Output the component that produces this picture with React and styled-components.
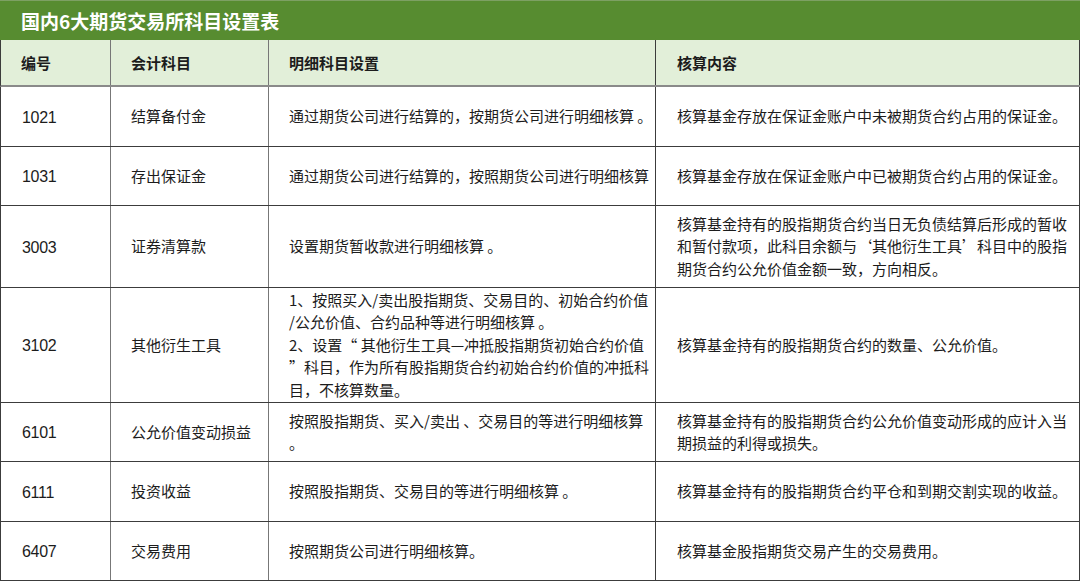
import React from "react";
import styled, { createGlobalStyle } from "styled-components";

const GlobalStyle = createGlobalStyle`
  html, body {
    margin: 0;
    padding: 0;
    background: #fff;
  }
  body {
    font-family: "Noto Sans CJK SC", "Noto Sans", sans-serif;
  }
`;

const Table = styled.div`
  width: 1080px;
  box-sizing: border-box;
  background: #fff;
`;

const Title = styled.div`
  height: 40px;
  box-sizing: border-box;
  background: #578c30;
  border-top: 1px solid #7da063;
  color: #fff;
  font-size: 19px;
  font-weight: 700;
  display: flex;
  align-items: center;
  padding-left: 21px;
  padding-bottom: 1px;
`;

const Row = styled.div`
  display: grid;
  grid-template-columns: 110px 158px 387px 1fr;
  height: ${(p) => p.$h}px;
  box-sizing: border-box;
  border-left: 1px solid #3c3c3c;
  border-bottom: ${(p) => (p.$head ? "2px solid #8a8a8a" : "1px solid #3c3c3c")};
  background: ${(p) => (p.$head ? "#e2efd9" : "#fff")};
`;

const Cell = styled.div`
  box-sizing: border-box;
  border-right: 1px solid ${(p) => (p.$soft ? "#777" : "#3c3c3c")};
  display: flex;
  flex-direction: column;
  justify-content: center;
  padding-left: ${(p) => p.$pad || 20}px;
  padding-top: ${(p) => (p.$head ? 2 : 0)}px;
  font-size: 15px;
  line-height: 22.4px;
  font-weight: ${(p) => (p.$head ? 700 : 400)};
  color: #1c1c1c;
`;

const CodeCell = styled(Cell)`
  font-family: "Liberation Sans", "Noto Sans CJK SC", sans-serif;
  font-size: 16px;
  letter-spacing: -0.3px;
  padding-left: 21px;
  padding-top: 3px;
`;

const Line = styled.span`
  display: block;
  white-space: pre;
`;

const rows = [
  {
    h: 60,
    code: "1021",
    name: "结算备付金",
    detail: ["通过期货公司进行结算的，按期货公司进行明细核算 。"],
    content: ["核算基金存放在保证金账户中未被期货合约占用的保证金。"],
  },
  {
    h: 59,
    code: "1031",
    name: "存出保证金",
    detail: ["通过期货公司进行结算的，按照期货公司进行明细核算"],
    content: ["核算基金存放在保证金账户中已被期货合约占用的保证金。"],
  },
  {
    h: 82,
    code: "3003",
    name: "证券清算款",
    detail: ["设置期货暂收款进行明细核算 。"],
    content: [
      "核算基金持有的股指期货合约当日无负债结算后形成的暂收",
      "和暂付款项，此科目余额与‘其他衍生工具’科目中的股指",
      "期货合约公允价值金额一致，方向相反。",
    ],
  },
  {
    h: 115,
    code: "3102",
    name: "其他衍生工具",
    detail: [
      "1、按照买入/卖出股指期货、交易目的、初始合约价值",
      "/公允价值、合约品种等进行明细核算 。",
      "2、设置“ 其他衍生工具—冲抵股指期货初始合约价值",
      "”科目，作为所有股指期货合约初始合约价值的冲抵科",
      "目，不核算数量。",
    ],
    content: ["核算基金持有的股指期货合约的数量、公允价值。"],
  },
  {
    h: 59,
    code: "6101",
    name: "公允价值变动损益",
    detail: ["按照股指期货、买入/卖出 、交易目的等进行明细核算", "。"],
    content: [
      "核算基金持有的股指期货合约公允价值变动形成的应计入当",
      "期损益的利得或损失。",
    ],
  },
  {
    h: 60,
    code: "6111",
    name: "投资收益",
    detail: ["按照股指期货、交易目的等进行明细核算 。"],
    content: ["核算基金持有的股指期货合约平仓和到期交割实现的收益。"],
  },
  {
    h: 59,
    code: "6407",
    name: "交易费用",
    detail: ["按照期货公司进行明细核算。"],
    content: ["核算基金股指期货交易产生的交易费用。"],
  },
];

function Lines({ items }) {
  return items.map((t, i) => <Line key={i}>{t}</Line>);
}

export default function App() {
  return (
    <>
      <GlobalStyle />
      <Table>
        <Title>国内6大期货交易所科目设置表</Title>
        <Row $h={47} $head>
          <Cell $head $soft>编号</Cell>
          <Cell $head $soft>会计科目</Cell>
          <Cell $head>明细科目设置</Cell>
          <Cell $head $pad={21}>核算内容</Cell>
        </Row>
        {rows.map((r) => (
          <Row key={r.code} $h={r.h}>
            <CodeCell $soft>{r.code}</CodeCell>
            <Cell $soft>{r.name}</Cell>
            <Cell>
              <Lines items={r.detail} />
            </Cell>
            <Cell $pad={21}>
              <Lines items={r.content} />
            </Cell>
          </Row>
        ))}
      </Table>
    </>
  );
}
